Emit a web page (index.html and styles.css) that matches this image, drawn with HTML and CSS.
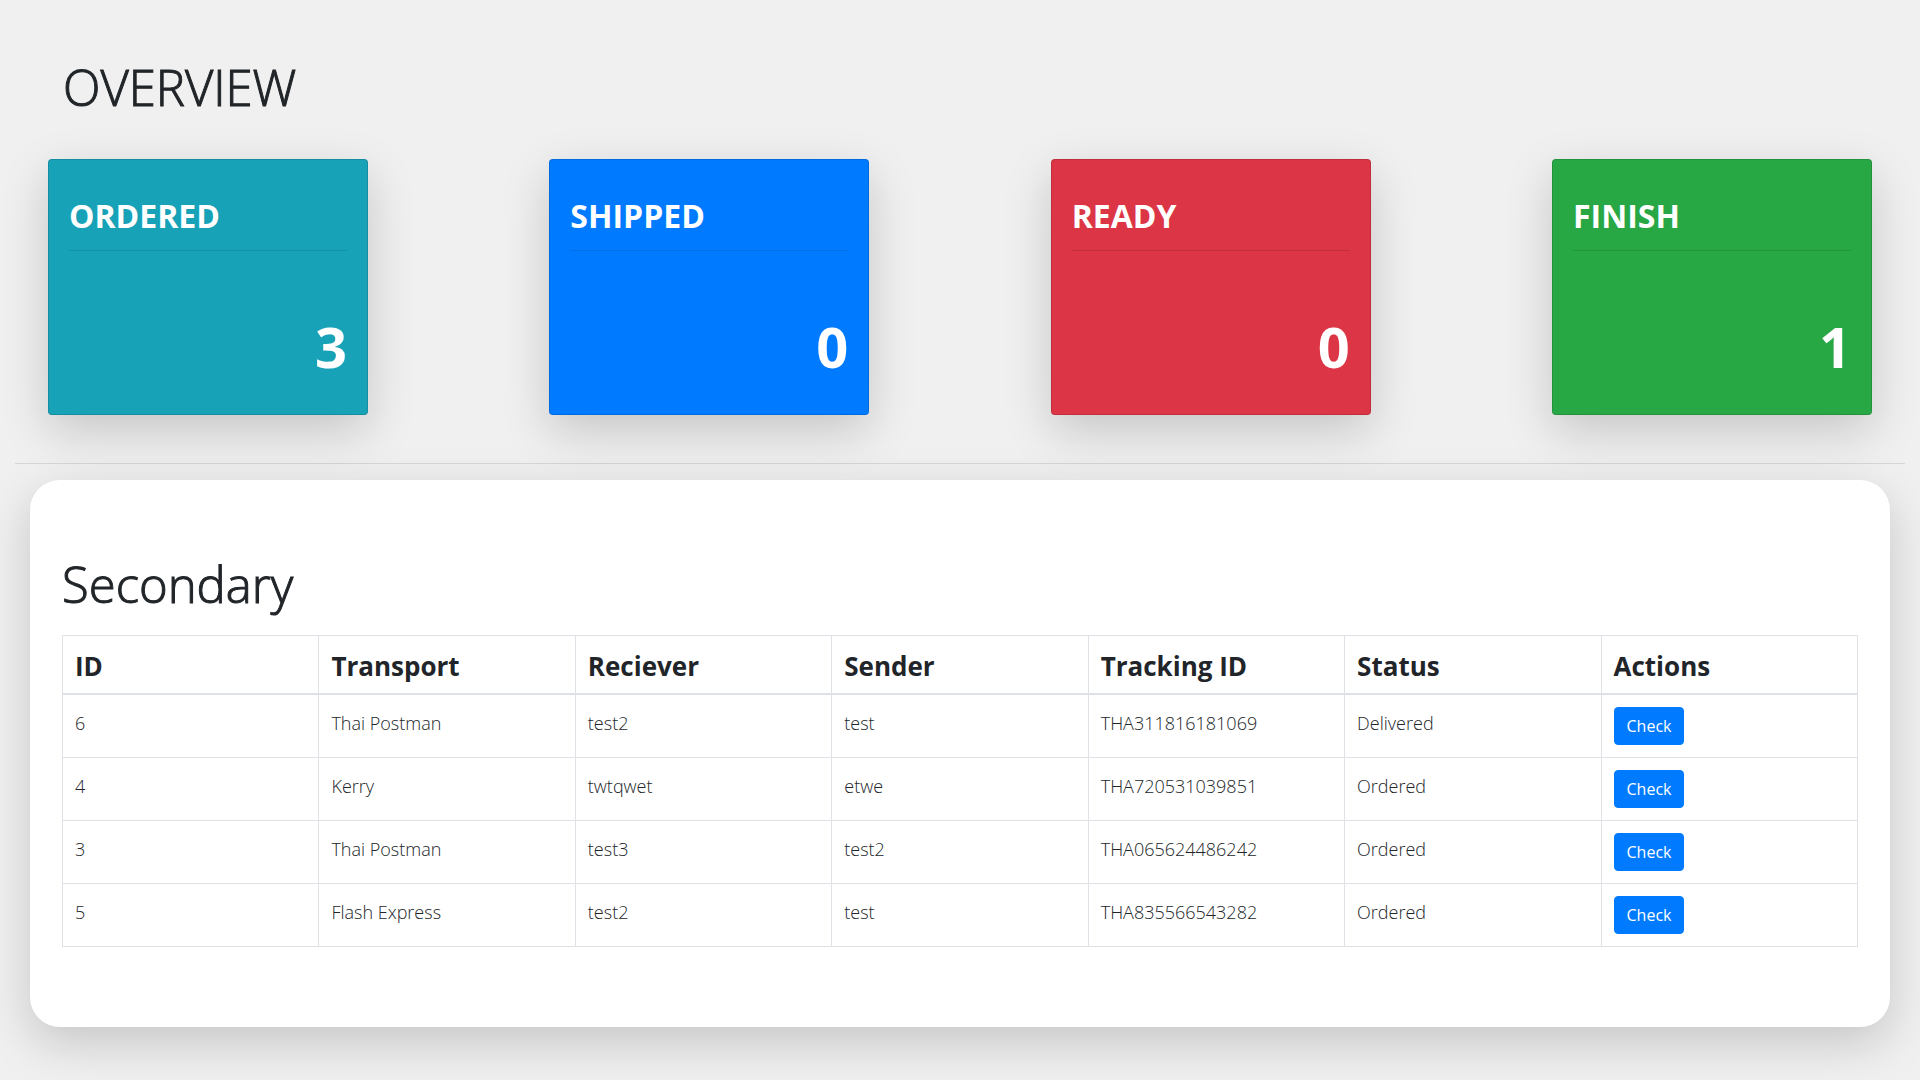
FILE: index.html
```html
<!DOCTYPE html>
<html lang="en">
<head>
<meta charset="utf-8">
<meta name="viewport" content="width=device-width, initial-scale=1">
<title>Overview</title>
<link rel="stylesheet" href="styles.css">
</head>
<body>
<main class="page">
  <section class="overview">
    <h1 class="title">OVERVIEW</h1>
    <div class="cards">
      <article class="card card-info"><h2 class="card-title">ORDERED</h2><hr class="card-rule"><p class="card-count">3</p></article>
      <article class="card card-primary"><h2 class="card-title">SHIPPED</h2><hr class="card-rule"><p class="card-count">0</p></article>
      <article class="card card-danger"><h2 class="card-title">READY</h2><hr class="card-rule"><p class="card-count">0</p></article>
      <article class="card card-success"><h2 class="card-title">FINISH</h2><hr class="card-rule"><p class="card-count">1</p></article>
    </div>
  </section>
  <hr class="divider">
  <section class="panel">
    <h2 class="title">Secondary</h2>
    <table class="orders">
      <thead>
        <tr><th scope="col">ID</th><th scope="col">Transport</th><th scope="col">Reciever</th><th scope="col">Sender</th><th scope="col">Tracking ID</th><th scope="col">Status</th><th scope="col">Actions</th></tr>
      </thead>
      <tbody>
        <tr><td>6</td><td>Thai Postman</td><td>test2</td><td>test</td><td>THA311816181069</td><td>Delivered</td><td><button class="btn" type="button">Check</button></td></tr>
        <tr><td>4</td><td>Kerry</td><td>twtqwet</td><td>etwe</td><td>THA720531039851</td><td>Ordered</td><td><button class="btn" type="button">Check</button></td></tr>
        <tr><td>3</td><td>Thai Postman</td><td>test3</td><td>test2</td><td>THA065624486242</td><td>Ordered</td><td><button class="btn" type="button">Check</button></td></tr>
        <tr><td>5</td><td>Flash Express</td><td>test2</td><td>test</td><td>THA835566543282</td><td>Ordered</td><td><button class="btn" type="button">Check</button></td></tr>
      </tbody>
    </table>
  </section>
</main>
</body>
</html>
```
FILE: styles.css
```css
*, *::before, *::after {
  box-sizing: border-box;
}

body {
  margin: 0;
  background: #f0f0f0;
  color: #212529;
  font-family: "Segoe UI", "Open Sans", "Noto Sans", sans-serif;
  font-size: 16px;
  line-height: 24px;
}

.page {
  padding: 0 15px 53px;
}

.title {
  margin: 0;
  font-size: 49px;
  font-weight: 300;
  line-height: 60px;
  -webkit-text-stroke: 1px currentColor;
}

.overview {
  padding: 57px 33px 48px;
}

.overview .title {
  padding-left: 15px;
}

.cards {
  display: flex;
  flex-wrap: wrap;
  justify-content: space-between;
  gap: 24px;
  margin-top: 42px;
}

.card {
  position: relative;
  display: flex;
  flex-direction: column;
  width: 320px;
  min-height: 256px;
  padding: 36px 20px;
  border: 1px solid rgba(0, 0, 0, 0.125);
  border-radius: 4px;
  color: #fff;
  box-shadow: 0 16px 48px rgba(0, 0, 0, 0.175);
}

.card-info { background: #17a2b8; }
.card-primary { background: #007bff; }
.card-danger { background: #dc3545; }
.card-success { background: #28a745; }

.card-title {
  margin: 0;
  font-size: 32px;
  font-weight: 700;
  line-height: 40px;
}

.card-rule {
  width: 100%;
  margin: 14px 0 0;
  border: 0;
  border-top: 1px solid rgba(0, 0, 0, 0.1);
}

.card-count {
  margin: 63px 0 0;
  font-size: 56px;
  font-weight: 700;
  line-height: 64px;
  text-align: right;
}

.divider {
  margin: 0 0 16px;
  border: 0;
  border-top: 1px solid rgba(0, 0, 0, 0.1);
}

.panel {
  margin: 0 15px;
  padding: 74px 32px 80px;
  border-radius: 30px;
  background: #fff;
  box-shadow: 0 16px 48px rgba(0, 0, 0, 0.175);
}

.orders {
  width: 100%;
  margin-top: 21px;
  border-collapse: collapse;
  table-layout: fixed;
}

.orders th,
.orders td {
  padding: 12px;
  border: 1px solid #dee2e6;
  text-align: left;
  vertical-align: top;
}

.orders th {
  padding: 14px 12px 10px;
  border-bottom-width: 2px;
  font-size: 26px;
  font-weight: 700;
  line-height: 33px;
}

.orders td {
  font-size: 18px;
  font-weight: 300;
  line-height: 32px;
}

.btn {
  display: block;
  padding: 6px 12px;
  border: 1px solid #007bff;
  border-radius: 4px;
  background: #007bff;
  color: #fff;
  font-family: inherit;
  font-size: 16px;
  line-height: 24px;
  cursor: pointer;
}
```
